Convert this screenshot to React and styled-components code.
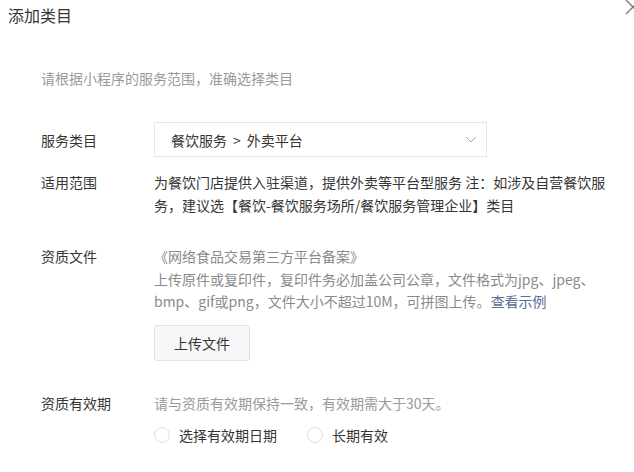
import React from 'react';
import styled, { createGlobalStyle } from 'styled-components';

const Global = createGlobalStyle`
  html, body {
    margin: 0;
    padding: 0;
    background: #fff;
  }
  body {
    font-family: "Noto Sans CJK SC", "Noto Sans", "Liberation Sans", sans-serif;
    font-size: 14px;
    color: #353535;
    overflow: hidden;
  }
`

const Dialog = styled.div`
  position: relative;
  width: 634px;
  height: 472px;
  background: #fff;
`

const Close = styled.button`
  position: absolute;
  left: 625px;
  top: -1px;
  width: 16px;
  height: 16px;
  padding: 0;
  border: 0;
  background: none;
  display: block;
`

const Title = styled.h3`
  margin: 0;
  padding: 5px 8px 0;
  font-size: 16px;
  font-weight: normal;
  line-height: 20px;
  color: #353535;
`

const Body = styled.div`
  padding: 42px 0 0 41px;
`

const Hint = styled.p`
  margin: 0;
  line-height: 22px;
  color: #9a9a9a;
`

const Row = styled.div`
  display: flex;
  align-items: ${props => props.center ? 'center' : 'flex-start'};
  margin-top: ${props => props.gap}px;
`

const Label = styled.div`
  width: 113px;
  flex-shrink: 0;
  line-height: 22px;
  color: #353535;
`

const Content = styled.div`
  width: 453px;
  line-height: 22.5px;
  color: ${props => props.muted ? '#9a9a9a' : '#353535'};
`

const Select = styled.div`
  width: 333px;
  height: 35px;
  box-sizing: border-box;
  border: 1px solid #e6e6e6;
  display: flex;
  align-items: center;
  justify-content: space-between;
  padding: 0 9px 0 16px;
  color: #353535;
`

const Arrow = styled.span`
  margin: 0 6px;
`

const Muted = styled.div`
  color: #8a8a8a;
`

const Link = styled.span`
  color: #576b95;
  cursor: pointer;
`

const UploadButton = styled.button`
  margin-top: 12px;
  width: 96px;
  height: 36px;
  border: 1px solid #e2e2e2;
  border-radius: 3px;
  background: #f6f7f8;
  font-family: inherit;
  font-size: 14px;
  color: #353535;
  padding: 0;
`

const RadioGroup = styled.div`
  display: flex;
  align-items: center;
  gap: 30px;
  margin: 10px 0 0 113px;
  line-height: 22px;
`

const Radio = styled.label`
  display: flex;
  align-items: center;
  gap: 9px;
  color: #353535;
`

const Dot = styled.span`
  width: 16px;
  height: 16px;
  box-sizing: border-box;
  border: 1px solid #dcdcdc;
  border-radius: 50%;
  background: #fff;
`

const App = () => {
  return (
    <Dialog>
      <Global />
      <Close aria-label="关闭">
        <svg width="16" height="16" viewBox="0 0 16 16">
          <path d="M1 1 L15 15 M15 1 L1 15" stroke="#7a7a7a" strokeWidth="1.4" fill="none" />
        </svg>
      </Close>
      <Title>添加类目</Title>
      <Body>
        <Hint>请根据小程序的服务范围，准确选择类目</Hint>

        <Row center gap={33}>
          <Label>服务类目</Label>
          <Select>
            <span>餐饮服务<Arrow>&gt;</Arrow>外卖平台</span>
            <svg width="12" height="7" viewBox="0 0 12 7">
              <polyline points="1,1 6,6 11,1" stroke="#a8a8a8" strokeWidth="1" fill="none" />
            </svg>
          </Select>
        </Row>

        <Row gap={14}>
          <Label>适用范围</Label>
          <Content>为餐饮门店提供入驻渠道，提供外卖等平台型服务 注：如涉及自营餐饮服务，建议选【餐饮-餐饮服务场所/餐饮服务管理企业】类目</Content>
        </Row>

        <Row gap={29}>
          <Label>资质文件</Label>
          <Content>
            <Muted>《网络食品交易第三方平台备案》</Muted>
            <Muted>上传原件或复印件，复印件务必加盖公司公章，文件格式为jpg、jpeg、bmp、gif或png，文件大小不超过10M，可拼图上传。<Link>查看示例</Link></Muted>
            <UploadButton>上传文件</UploadButton>
          </Content>
        </Row>

        <Row gap={31}>
          <Label>资质有效期</Label>
          <Content muted>请与资质有效期保持一致，有效期需大于30天。</Content>
        </Row>

        <RadioGroup>
          <Radio><Dot />选择有效期日期</Radio>
          <Radio><Dot />长期有效</Radio>
        </RadioGroup>
      </Body>
    </Dialog>
  );
}

export default App;
